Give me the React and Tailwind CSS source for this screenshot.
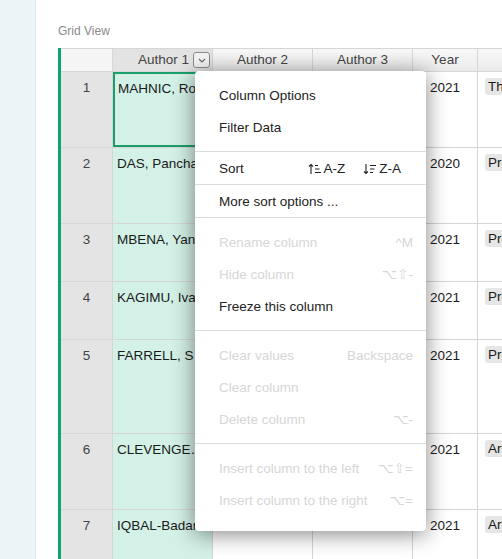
import React from "react";

const rows = [
  { n: 1, a1: "MAHNIC, Rok", year: "2021", tag: "Thesis", h: "h-[76px]", selected: true },
  { n: 2, a1: "DAS, Panchanan", year: "2020", tag: "Preprint", h: "h-[76px]" },
  { n: 3, a1: "MBENA, Yang", year: "2021", tag: "Preprint", h: "h-[58px]" },
  { n: 4, a1: "KAGIMU, Ivan", year: "2021", tag: "Preprint", h: "h-[58px]" },
  { n: 5, a1: "FARRELL, Sean", year: "2021", tag: "Preprint", h: "h-[94px]" },
  { n: 6, a1: "CLEVENGER, Amy", year: "2021", tag: "Article", h: "h-[76px]" },
  { n: 7, a1: "IQBAL-Badar, M", year: "2021", tag: "Article", h: "h-[76px]" },
];

function SortIcon({ down }) {
  return (
    <svg width="14" height="12" viewBox="0 0 14 12" fill="none" stroke="#222" strokeWidth="1.1">
      {down ? (
        <>
          <path d="M3 1v9.5M1 8.5l2 2 2-2" />
          <path d="M7 2.5h6M7 6h4.5M7 9.5h3" />
        </>
      ) : (
        <>
          <path d="M3 11V1.5M1 3.5l2-2 2 2" />
          <path d="M7 2.5h3M7 6h4.5M7 9.5h6" />
        </>
      )}
    </svg>
  );
}

function Item({ label, shortcut, disabled }) {
  return (
    <div className="flex h-8 items-center justify-between pt-[2px] pl-6 pr-[13px]">
      <span className={disabled ? "text-[#d6d6d6]" : "text-[#222]"}>{label}</span>
      {shortcut && <span className="text-[#d6d6d6]">{shortcut}</span>}
    </div>
  );
}

function Sep() {
  return <div className="h-px bg-[#dcdcdc]" />;
}

function ColumnMenu() {
  return (
    <div className="absolute left-[195px] top-[71px] w-[231px] h-[460px] rounded bg-white text-[13.5px] shadow-[0_3px_22px_rgba(0,0,0,0.48)]">
      <div className="py-2">
        <Item label="Column Options" />
        <Item label="Filter Data" />
      </div>
      <Sep />
      <div className="flex h-8 items-center justify-between pt-[2px] pl-6 pr-[25px] text-[#222]">
        <span>Sort</span>
        <div className="flex items-center gap-[18px]">
          <span className="flex items-center gap-[2px]">
            <SortIcon />
            A-Z
          </span>
          <span className="flex items-center gap-[2px]">
            <SortIcon down />
            Z-A
          </span>
        </div>
      </div>
      <Sep />
      <Item label="More sort options ..." />
      <Sep />
      <div className="py-2">
        <Item label="Rename column" shortcut="^M" disabled />
        <Item label="Hide column" shortcut="⌥⇧-" disabled />
        <Item label="Freeze this column" />
      </div>
      <Sep />
      <div className="py-2">
        <Item label="Clear values" shortcut="Backspace" disabled />
        <Item label="Clear column" disabled />
        <Item label="Delete column" shortcut="⌥-" disabled />
      </div>
      <Sep />
      <div className="py-2">
        <Item label="Insert column to the left" shortcut="⌥⇧=" disabled />
        <Item label="Insert column to the right" shortcut="⌥=" disabled />
      </div>
    </div>
  );
}

export default function App() {
  return (
    <div className="relative flex h-[559px] overflow-hidden bg-white font-['Liberation_Sans','DejaVu_Sans',sans-serif] text-[13.5px] text-[#1a1a1a]">
      <aside className="w-[36px] shrink-0 border-r border-[#e1e6e9] bg-[#edf4f7]" />

      <main className="flex-1 overflow-hidden pl-[22px] pt-[22px]">
        <p className="mb-[10px] h-4 pt-px text-[12px] leading-4 text-[#8a8a8a]">Grid View</p>

        <div className="w-[600px] border-l-[3px] border-[#0ca56f]">
          {/* header */}
          <div className="flex h-[24px] border-y border-[#d6d6d6] text-[#444]">
            <div className="w-[52px] shrink-0 border-r border-[#d6d6d6] bg-[#f5f5f5]" />
            <div className="flex w-[100px] shrink-0 items-center justify-end gap-[4px] border-r border-[#d6d6d6] bg-[#e3e3e3] pr-[2px]">
              <span>Author 1</span>
              <span className="flex h-[16px] w-[17px] items-center justify-center rounded-[3px] border border-[#8c8c8c] bg-[#f4f4f4]">
                <svg width="8" height="5" viewBox="0 0 8 5" fill="none" stroke="#666" strokeWidth="1.1">
                  <path d="M1 1l3 3 3-3" />
                </svg>
              </span>
            </div>
            <div className="flex w-[100px] shrink-0 items-center justify-center border-r border-[#d6d6d6] bg-linear-to-b from-[#f8f8f8] to-[#ebebeb]">
              Author 2
            </div>
            <div className="flex w-[100px] shrink-0 items-center justify-center border-r border-[#d6d6d6] bg-linear-to-b from-[#f8f8f8] to-[#ebebeb]">
              Author 3
            </div>
            <div className="flex w-[65px] shrink-0 items-center justify-center border-r border-[#d6d6d6] bg-linear-to-b from-[#f8f8f8] to-[#ebebeb]">
              Year
            </div>
            <div className="flex-1 bg-linear-to-b from-[#f8f8f8] to-[#ebebeb]" />
          </div>

          {/* body */}
          {rows.map((r) => (
            <div key={r.n} className={`flex ${r.h} border-b border-[#d6d6d6]`}>
              <div className="w-[52px] shrink-0 border-r border-[#d6d6d6] bg-[#e4e4e4] pt-[6px] text-center text-[#444]">
                {r.n}
              </div>
              <div
                className={
                  r.selected
                    ? "w-[100px] shrink-0 truncate border-2 border-[#1a9f6c] bg-[#d3f1e6] pt-[5px] pl-[3px]"
                    : "w-[100px] shrink-0 truncate border-r border-[#d6d6d6] bg-[#d3f1e6] pt-[6px] pl-[4px]"
                }
              >
                {r.a1}
              </div>
              <div className="w-[100px] shrink-0 border-r border-[#d6d6d6]" />
              <div className="w-[100px] shrink-0 border-r border-[#d6d6d6]" />
              <div className="w-[65px] shrink-0 border-r border-[#d6d6d6] pt-[6px] text-center">{r.year}</div>
              <div className="flex-1 pl-[7px] pt-[5px]">
                <span className="rounded-[3px] bg-[#e6e6e6] px-[3px] py-[1px]">{r.tag}</span>
              </div>
            </div>
          ))}
        </div>
      </main>

      <ColumnMenu />
    </div>
  );
}
